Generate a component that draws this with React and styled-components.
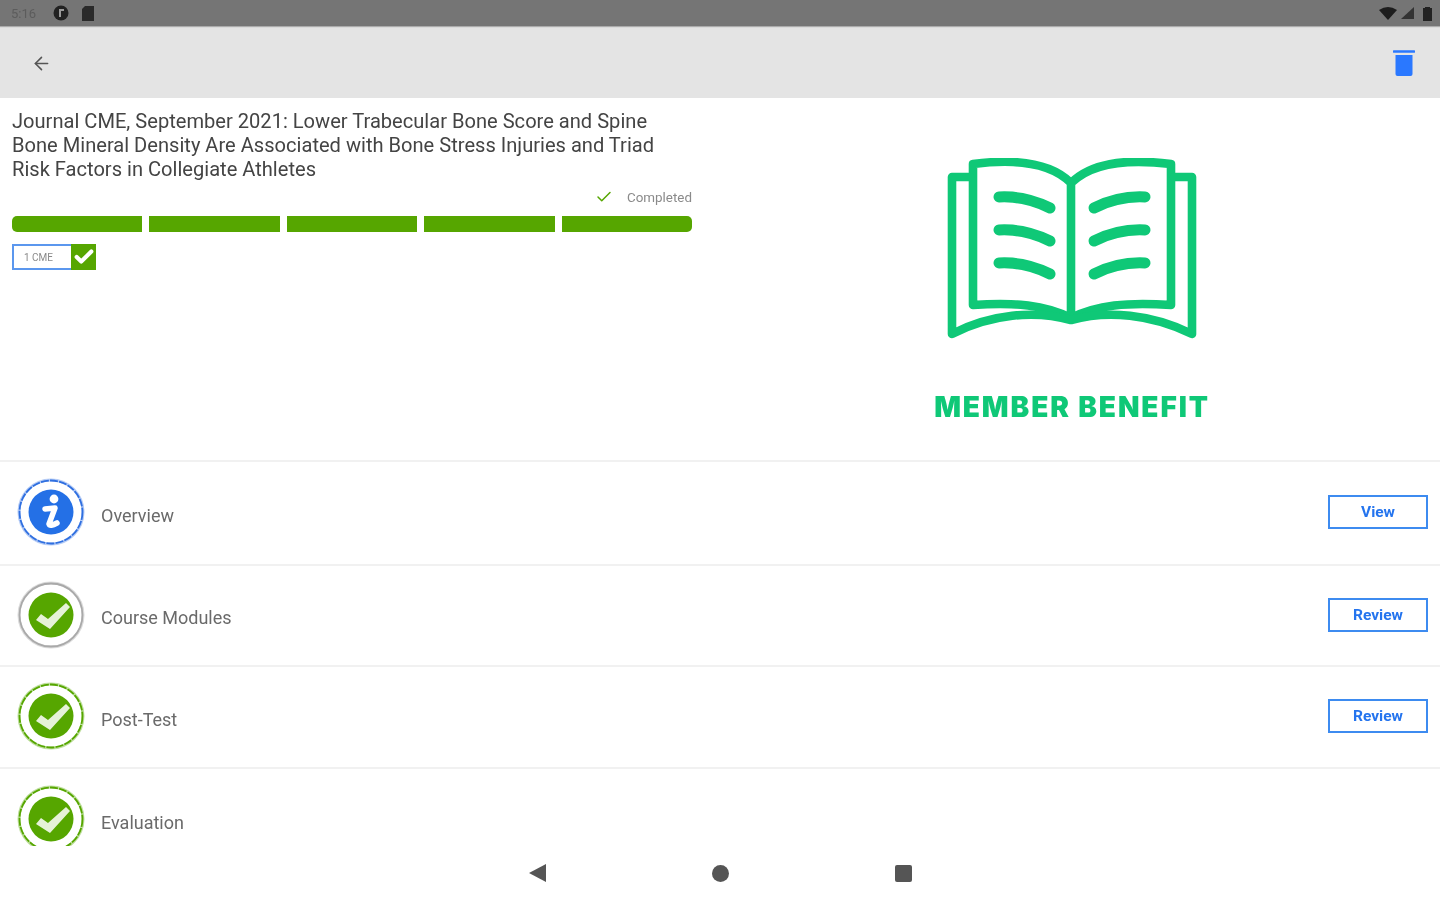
import styled, { createGlobalStyle } from "styled-components";
import { ArrowLeft, Check } from "lucide-react";

const Global = createGlobalStyle`
  html, body { margin: 0; padding: 0; background: #fff; overflow: hidden; }
  body { font-family: Roboto, "Liberation Sans", sans-serif; }
`;

const Screen = styled.div`
  width: 1440px;
  height: 900px;
  display: flex;
  flex-direction: column;
  overflow: hidden;
  filter: blur(0.7px);
`;

const StatusBar = styled.div`
  height: 26px;
  flex: none;
  background: #757575;
  display: flex;
  align-items: center;
  justify-content: space-between;
  padding: 0 8px 0 11px;
  box-shadow: 0 1px 1px rgba(0, 0, 0, 0.25);
  position: relative;
  color: #5c5c5c;
  font-size: 13px;
`;

const StatusGroup = styled.div`
  display: flex;
  align-items: center;
  gap: ${(p) => p.$gap || 8}px;
`;

const Time = styled.span`
  width: 28px;
`;

const StatusGlyph = styled.svg`
  margin-left: ${(p) => p.$shift || 0}px;
`;

const Toolbar = styled.div`
  height: 72px;
  flex: none;
  box-sizing: border-box;
  background: #e4e4e4;
  display: flex;
  align-items: center;
  justify-content: space-between;
  padding: 2px 25px 0 31px;
  color: #555;
`;

const Summary = styled.section`
  height: 362px;
  flex: none;
  display: flex;
`;

const CourseInfo = styled.div`
  width: 704px;
  flex: none;
  box-sizing: border-box;
  padding: 11px 12px 0;
`;

const Title = styled.h1`
  margin: 0;
  font-size: 20.1px;
  font-weight: 400;
  line-height: 24px;
  color: #444;
  white-space: nowrap;
`;

const CompletedRow = styled.div`
  display: flex;
  justify-content: flex-end;
  align-items: center;
  gap: 14px;
  height: 20px;
  margin-top: 6px;
  color: #8a8a8a;
  font-size: 13.4px;
`;

const Progress = styled.div`
  display: flex;
  gap: 7px;
  margin-top: 9px;
`;

const Segment = styled.div`
  flex: 1;
  height: 16px;
  background: #56a600;
  &:first-child { border-radius: 5px 0 0 5px; }
  &:last-child { border-radius: 0 5px 5px 0; }
`;

const Credit = styled.div`
  display: flex;
  width: 84px;
  height: 26px;
  margin-top: 12px;
`;

const CreditLabel = styled.div`
  width: 59px;
  box-sizing: border-box;
  border: 2px solid #5b97ee;
  border-right: none;
  padding-right: 8px;
  color: #8a8a8a;
  font-size: 10px;
  display: flex;
  align-items: center;
  justify-content: center;
`;

const CreditCheck = styled.div`
  flex: 1;
  background: #56a600;
  color: #fff;
  display: flex;
  align-items: center;
  justify-content: center;
`;

const Benefit = styled.div`
  flex: 1;
  display: flex;
  flex-direction: column;
  align-items: center;
  padding-top: 60px;
`;

const BenefitText = styled.div`
  margin-top: 42px;
  color: #0fc877;
  font-family: Inter, sans-serif;
  font-size: 28px;
  font-weight: 900;
  letter-spacing: 1.9px;
  line-height: 34px;
  white-space: nowrap;
`;

const List = styled.div`
  height: 386px;
  flex: none;
  overflow: hidden;
`;

const Row = styled.div`
  height: ${(p) => p.$height}px;
  box-sizing: border-box;
  border-top: 2px solid #f1f1f1;
  display: flex;
  align-items: center;
  padding: 0 12px 0 17px;
`;

const RowIcon = styled.svg`
  margin-top: -2px;
`;

const RowLabel = styled.span`
  flex: 1;
  margin-left: 16px;
  margin-top: 4px;
  font-size: 18px;
  color: #6a6a6a;
`;

const ActionButton = styled.button`
  width: 100px;
  height: 34px;
  box-sizing: border-box;
  border: 2px solid #3d8bf0;
  background: #fff;
  color: #2474ee;
  font-family: inherit;
  font-size: 15.5px;
  font-weight: 700;
  padding: 0;
  margin-top: -2px;
`;

const NavBar = styled.div`
  flex: 1;
  display: flex;
  justify-content: center;
  align-items: center;
`;

const NavSlot = styled.div`
  width: 183px;
  display: flex;
  justify-content: center;
`;

const NavCircle = styled.div`
  width: 17px;
  height: 17px;
  border-radius: 50%;
  background: #555;
`;

const NavSquare = styled.div`
  width: 17px;
  height: 17px;
  border-radius: 2px;
  background: #555;
`;

const ringColors = {
  blue: ["#b7cdf6", "#2f6fe0"],
  grey: ["#dcdcdc", "#a9a9a9"],
  green: ["#bfdf9f", "#56a600"],
};

function StatusIcon({ ring, kind }) {
  const fill = kind === "info" ? "#2470e6" : "#56a600";
  const [halo, dash] = ringColors[ring];
  return (
    <RowIcon width="68" height="68" viewBox="-34 -34 68 68">
      <circle r="32" fill="none" stroke={halo} strokeWidth="3" />
      <circle r="31.5" fill="none" stroke={dash} strokeWidth="1.8" strokeDasharray={ring === "grey" ? undefined : "8 1.2"} />
      <circle r="22.5" fill={fill} />
      {kind === "info" ? (
        <>
          <circle cx="3" cy="-13" r="4.4" fill="#fff" />
          <path d="M-6 -3 L4 -4 L-2 12 Q-1 15 6 11" fill="none" stroke="#fff" strokeWidth="5.5" strokeLinejoin="round" strokeLinecap="round" />
        </>
      ) : (
        <path d="M-15 5 L-10 -1 L-3 4 L15 -12 L19 -8 L-1 14 Z" fill="#e6f2d8" strokeLinejoin="round" />
      )}
    </RowIcon>
  );
}

function BookIcon() {
  const lines = [0, 33, 66];
  return (
    <svg width="260" height="190" viewBox="22 18 260 190">
      <g fill="none" stroke="#0fc877" strokeWidth="8.6" strokeLinejoin="round" strokeLinecap="round">
        <path d="M151 43 C132 24 100 18 53 24 V165 C95 162 125 165 151 178 C177 165 207 162 251 165 V24 C202 18 170 24 151 43 V178" />
        <path d="M50 37 H32 V194 C70 174 115 170 151 180 C187 170 232 174 272 194 V37 H254" />
      </g>
      <g fill="none" stroke="#0fc877" strokeWidth="11" strokeLinecap="round">
        {lines.map((y) => (
          <g key={y} transform={`translate(0 ${y})`}>
            <path d="M79 57 C98 56 114 60 130 68" />
            <path d="M225 57 C206 56 190 60 174 68" />
          </g>
        ))}
      </g>
    </svg>
  );
}

function TrashIcon() {
  return (
    <svg width="22" height="28" viewBox="0 0 22 28">
      <path d="M1 2.5 H21" stroke="#2a78ff" strokeWidth="2.6" strokeLinecap="round" />
      <path d="M2.5 6 H19.5 V25 Q19.5 27 17.5 27 H4.5 Q2.5 27 2.5 25 Z" fill="#2a78ff" />
    </svg>
  );
}

const rows = [
  { label: "Overview", ring: "blue", kind: "info", action: "View", height: 104 },
  { label: "Course Modules", ring: "grey", kind: "check", action: "Review", height: 101 },
  { label: "Post-Test", ring: "green", kind: "check", action: "Review", height: 102 },
  { label: "Evaluation", ring: "green", kind: "check", height: 104 },
];

export default function App() {
  return (
    <Screen>
      <Global />
      <StatusBar>
        <StatusGroup $gap={14}>
          <Time>5:16</Time>
          <svg width="16" height="16" viewBox="0 0 16 16">
            <circle cx="8" cy="8" r="7.5" fill="#222" />
            <path d="M7 12 V5 H11" stroke="#999" strokeWidth="2" fill="none" />
          </svg>
          <StatusGlyph $shift={-1} width="12" height="15" viewBox="0 0 12 15">
            <path d="M3 0 H12 V15 H0 V3 Z" fill="#2a2a2a" />
          </StatusGlyph>
        </StatusGroup>
        <StatusGroup $gap={4}>
          <svg width="18" height="13" viewBox="0 0 18 13">
            <path d="M0 3 Q9 -3 18 3 L9 13 Z" fill="#1d1d1d" />
          </svg>
          <svg width="13" height="12" viewBox="0 0 13 12">
            <path d="M13 0 V12 H0 Z" fill="#333" />
          </svg>
          <StatusGlyph $shift={5} width="9" height="15" viewBox="0 0 9 15">
            <path d="M2 1 H7 V2 H9 V15 H0 V2 H2 Z" fill="#222" />
          </StatusGlyph>
        </StatusGroup>
      </StatusBar>
      <Toolbar>
        <ArrowLeft size={21} strokeWidth={1.8} />
        <TrashIcon />
      </Toolbar>
      <Summary>
        <CourseInfo>
          <Title>
            Journal CME, September 2021: Lower Trabecular Bone Score and Spine
            <br />
            Bone Mineral Density Are Associated with Bone Stress Injuries and Triad
            <br />
            Risk Factors in Collegiate Athletes
          </Title>
          <CompletedRow>
            <Check size={18} color="#56a600" strokeWidth={2} />
            <span>Completed</span>
          </CompletedRow>
          <Progress>
            {[0, 1, 2, 3, 4].map((i) => (
              <Segment key={i} />
            ))}
          </Progress>
          <Credit>
            <CreditLabel>1 CME</CreditLabel>
            <CreditCheck>
              <Check size={22} strokeWidth={4.5} />
            </CreditCheck>
          </Credit>
        </CourseInfo>
        <Benefit>
          <BookIcon />
          <BenefitText>MEMBER BENEFIT</BenefitText>
        </Benefit>
      </Summary>
      <List>
        {rows.map((r) => (
          <Row key={r.label} $height={r.height}>
            <StatusIcon ring={r.ring} kind={r.kind} />
            <RowLabel>{r.label}</RowLabel>
            {r.action && <ActionButton>{r.action}</ActionButton>}
          </Row>
        ))}
      </List>
      <NavBar>
        <NavSlot>
          <svg width="17" height="18" viewBox="0 0 17 18">
            <path d="M17 0 V18 L0 9 Z" fill="#555" />
          </svg>
        </NavSlot>
        <NavSlot>
          <NavCircle />
        </NavSlot>
        <NavSlot>
          <NavSquare />
        </NavSlot>
      </NavBar>
    </Screen>
  );
}
